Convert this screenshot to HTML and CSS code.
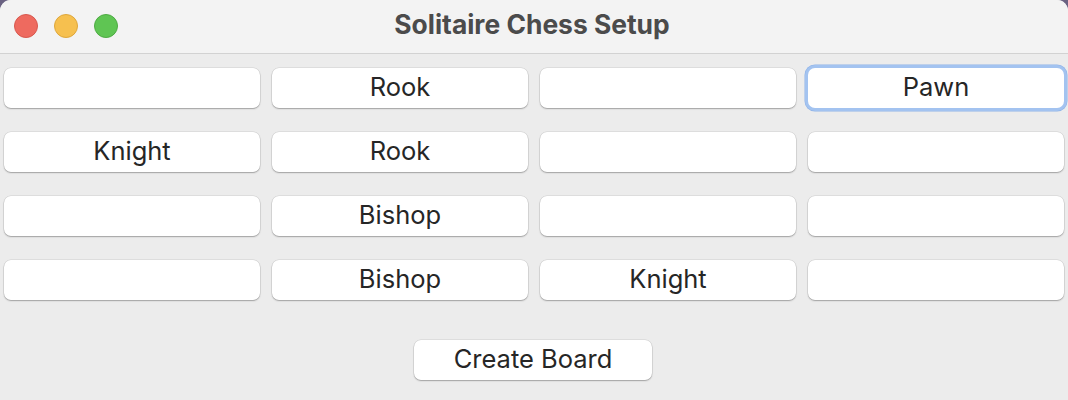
FILE: index.html
```html
<!DOCTYPE html>
<html>
<head>
<meta charset="utf-8">
<link rel="stylesheet" href="styles.css">
</head>
<body>
<div class="window">
  <div class="titlebar">
    <div class="lights">
      <span class="light red"></span>
      <span class="light yellow"></span>
      <span class="light green"></span>
    </div>
    <div class="title">Solitaire Chess Setup</div>
  </div>
  <div class="content">
    <div class="grid">
      <button class="cell"></button>
      <button class="cell">Rook</button>
      <button class="cell"></button>
      <button class="cell focused">Pawn</button>
      <button class="cell">Knight</button>
      <button class="cell">Rook</button>
      <button class="cell"></button>
      <button class="cell"></button>
      <button class="cell"></button>
      <button class="cell">Bishop</button>
      <button class="cell"></button>
      <button class="cell"></button>
      <button class="cell"></button>
      <button class="cell">Bishop</button>
      <button class="cell">Knight</button>
      <button class="cell"></button>
    </div>
    <div class="actions">
      <button class="cell create">Create Board</button>
    </div>
  </div>
</div>
</body>
</html>
```

FILE: styles.css
```css
html, body {
  margin: 0;
  padding: 0;
  width: 1068px;
  height: 400px;
  overflow: hidden;
  background: #6a6282;
}

.window {
  width: 1068px;
  height: 400px;
  background: #ececec;
  border-radius: 11px 11px 0 0;
  overflow: hidden;
  font-family: Inter, "Noto Sans", sans-serif;
}

.titlebar {
  height: 53px;
  background: #f3f3f3;
  border-bottom: 1px solid #d2d2d2;
  position: relative;
  display: flex;
  align-items: center;
  justify-content: center;
}

.lights {
  position: absolute;
  left: 14px;
  top: 14px;
  display: flex;
  gap: 16px;
}

.light {
  width: 24px;
  height: 24px;
  border-radius: 50%;
  box-sizing: border-box;
}

.red { background: #ee6a5f; border: 1px solid #d8584e; }
.yellow { background: #f6c04f; border: 1px solid #dea73b; }
.green { background: #5fc553; border: 1px solid #4eab43; }

.title {
  font-size: 26.4px;
  font-weight: 700;
  color: #4b4b4b;
  margin-left: -4px;
  padding-bottom: 5px;
}

.content {
  padding: 14px 4px 0 4px;
}

.grid {
  display: grid;
  grid-template-columns: repeat(4, 256px);
  grid-auto-rows: 40px;
  column-gap: 12px;
  row-gap: 24px;
}

.cell {
  margin: 0;
  padding: 0 0 4px 0;
  background: #ffffff;
  border: none;
  border-radius: 7px;
  box-shadow: 0 0 0 0.5px rgba(0, 0, 0, 0.12), 0 1px 1.5px rgba(0, 0, 0, 0.28);
  font-family: Inter, "Noto Sans", sans-serif;
  font-size: 25.5px;
  color: #262626;
  height: 40px;
}

.focused {
  box-shadow: 0 0 0 3px #a3c3f0, 0 0 0 3.5px #8fb3e8;
}

.actions {
  display: flex;
  justify-content: center;
  padding-top: 40px;
  padding-right: 2px;
}

.create {
  width: 238px;
}
```
